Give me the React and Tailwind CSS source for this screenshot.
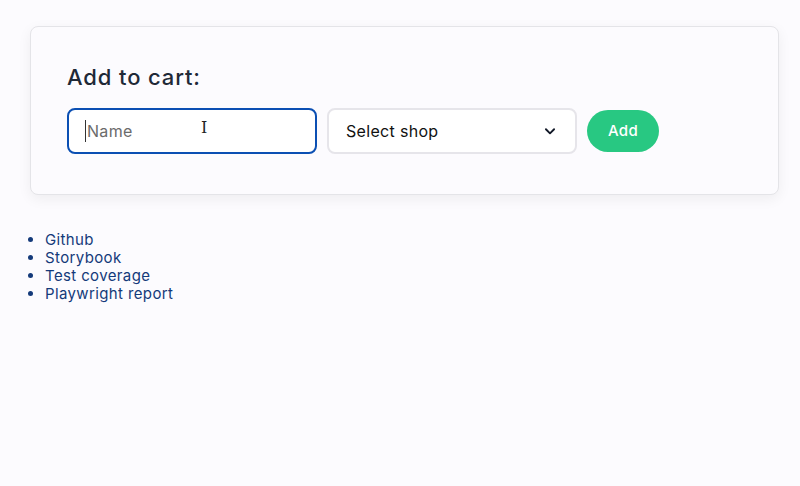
import React from "react";

export default function App() {
  return (
    <div className="min-h-screen bg-[#fcfbfe] pt-[26px] px-[30px] text-[#1f2937]" style={{ fontFamily: "Inter, 'Open Sans', sans-serif" }}>
      <div className="w-[749px] rounded-lg border border-[#e4e4e8] bg-[#fcfbfe] px-[36px] pt-[35px] pb-[40px] shadow-[0_4px_14px_rgba(0,0,0,0.06)]">
        <h2 className="text-[22px] leading-[30px] font-medium tracking-[0.04em] text-[#1f2937] mb-[16px]">Add to cart:</h2>
        <div className="flex items-center gap-[10px]">
          <div className="relative">
            <input
              className="w-[250px] h-[46px] rounded-lg border-2 border-[#0b4fb3] bg-white pl-[18px] pr-3 text-[16px] tracking-[0.02em] text-[#111] placeholder:text-[#6b6b6b] outline-none"
              placeholder="Name"
            />
            <span className="absolute left-[18px] top-[12px] h-[22px] w-px bg-[#333]" />
            <span className="absolute left-[134px] top-[12px] text-[16px] leading-none text-[#222] select-none" style={{ fontFamily: "'DejaVu Serif', serif" }}>I</span>
          </div>
          <div className="w-[250px] h-[46px] rounded-lg border-2 border-[#e6e5ea] bg-white pl-[17px] pr-[18px] flex items-center justify-between">
            <span className="text-[16px] tracking-[0.02em] text-[#111]">Select shop</span>
            <svg width="14" height="14" viewBox="0 0 24 24" fill="none" stroke="#111827" strokeWidth="3.2" strokeLinecap="round" strokeLinejoin="round">
              <path d="M5 9l7 7 7-7" />
            </svg>
          </div>
          <button className="w-[72px] h-[42px] rounded-full bg-[#28c882] text-white text-[15px] font-medium tracking-[0.02em]">Add</button>
        </div>
      </div>
      <ul className="mt-[36px] list-disc pl-[15px] text-[15px] leading-[18px] tracking-[0.025em] text-[#143a7a]">
        <li><a href="#">Github</a></li>
        <li><a href="#">Storybook</a></li>
        <li><a href="#">Test coverage</a></li>
        <li><a href="#">Playwright report</a></li>
      </ul>
    </div>
  );
}
